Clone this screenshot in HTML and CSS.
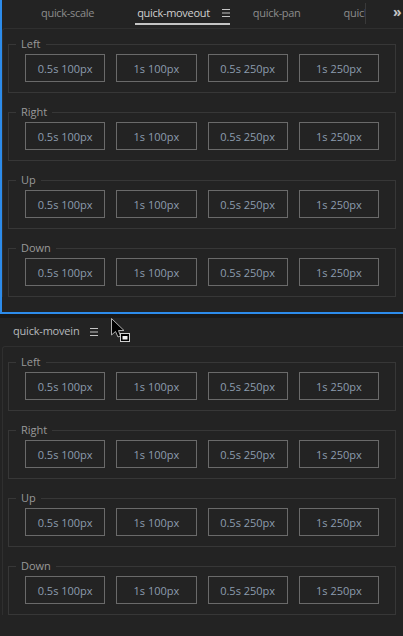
FILE: index.html
```html
<!DOCTYPE html>
<html lang="en">
<head>
<meta charset="utf-8">
<title>quick panels</title>
<link rel="stylesheet" href="styles.css">
</head>
<body>
<div class="panel panel-top">
  <div class="tabbar">
    <div class="tabs">
      <div class="tab"><span class="tab-label">quick-scale</span><span class="tab-menu is-hidden"><svg width="8" height="8" viewBox="0 0 8 8"><path d="M0 0.5H8M0 4H8M0 7.5H8" stroke="currentColor" stroke-width="1"/></svg></span></div>
      <div class="tab is-active"><span class="tab-label">quick-moveout</span><span class="tab-menu"><svg width="8" height="8" viewBox="0 0 8 8"><path d="M0 0.5H8M0 4H8M0 7.5H8" stroke="currentColor" stroke-width="1"/></svg></span></div>
      <div class="tab"><span class="tab-label">quick-pan</span><span class="tab-menu is-hidden"><svg width="8" height="8" viewBox="0 0 8 8"><path d="M0 0.5H8M0 4H8M0 7.5H8" stroke="currentColor" stroke-width="1"/></svg></span></div>
      <div class="tab tab-clipped"><span class="tab-label">quick-movein</span></div>
    </div>
    <div class="tab-sep"></div>
    <div class="tab-overflow">»</div>
  </div>
  <div class="frame">
    <fieldset class="group"><legend>Left</legend>
      <div class="buttons"><button>0.5s 100px</button><button>1s 100px</button><button>0.5s 250px</button><button>1s 250px</button></div>
    </fieldset>
    <fieldset class="group"><legend>Right</legend>
      <div class="buttons"><button>0.5s 100px</button><button>1s 100px</button><button>0.5s 250px</button><button>1s 250px</button></div>
    </fieldset>
    <fieldset class="group"><legend>Up</legend>
      <div class="buttons"><button>0.5s 100px</button><button>1s 100px</button><button>0.5s 250px</button><button>1s 250px</button></div>
    </fieldset>
    <fieldset class="group"><legend>Down</legend>
      <div class="buttons"><button>0.5s 100px</button><button>1s 100px</button><button>0.5s 250px</button><button>1s 250px</button></div>
    </fieldset>
  </div>
</div>
<div class="panel-gap"></div>
<div class="panel panel-bottom">
  <div class="header"><span class="header-label">quick-movein</span><span class="header-menu"><svg width="8" height="8" viewBox="0 0 8 8"><path d="M0 0.5H8M0 4H8M0 7.5H8" stroke="currentColor" stroke-width="1"/></svg></span></div>
  <div class="frame">
    <fieldset class="group"><legend>Left</legend>
      <div class="buttons"><button>0.5s 100px</button><button>1s 100px</button><button>0.5s 250px</button><button>1s 250px</button></div>
    </fieldset>
    <fieldset class="group"><legend>Right</legend>
      <div class="buttons"><button>0.5s 100px</button><button>1s 100px</button><button>0.5s 250px</button><button>1s 250px</button></div>
    </fieldset>
    <fieldset class="group"><legend>Up</legend>
      <div class="buttons"><button>0.5s 100px</button><button>1s 100px</button><button>0.5s 250px</button><button>1s 250px</button></div>
    </fieldset>
    <fieldset class="group"><legend>Down</legend>
      <div class="buttons"><button>0.5s 100px</button><button>1s 100px</button><button>0.5s 250px</button><button>1s 250px</button></div>
    </fieldset>
  </div>
</div>
<svg class="cursor" width="20" height="25" viewBox="0 0 20 25">
  <path d="M0.5 0.5 L0.5 17 L4.5 13.5 L7 19 L9.5 18 L7.5 12.5 L13 12.5 Z" fill="#000" stroke="#b0b0b0" stroke-width="1"/>
  <rect x="9.5" y="15.5" width="9" height="8" fill="#000" stroke="#cfcfcf" stroke-width="1"/>
  <rect x="11.5" y="18" width="5" height="3.5" fill="#f0f0f0"/>
</svg>
</body>
</html>
```
FILE: styles.css
```css
html, body {
  margin: 0;
  padding: 0;
}
body {
  position: relative;
  width: 403px;
  height: 636px;
  overflow: hidden;
  background: #191919;
  font-family: "Open Sans", "Noto Sans", sans-serif;
  font-size: 11px;
}
.panel {
  background: #232323;
  border-left: 2px solid #232323;
  overflow: hidden;
}
.panel-top {
  height: 312px;
  border-left-color: #2d8ceb;
  border-bottom: 2px solid #2d8ceb;
}
.panel-gap {
  height: 4px;
}
.panel-bottom {
  height: 318px;
}
.tabbar {
  height: 28px;
  display: flex;
}
.tabs {
  flex: none;
  width: 363px;
  box-sizing: border-box;
  padding-left: 37px;
  display: flex;
  gap: 21px;
  overflow: hidden;
}
.tab {
  flex: none;
  display: flex;
  gap: 12px;
  padding: 3px 0 0 2px;
  height: 20px;
  line-height: 20px;
  border-bottom: 2px solid transparent;
  color: #8c8c8c;
  letter-spacing: -0.3px;
  white-space: nowrap;
}
.tab-clipped {
  flex: 1 1 auto;
  min-width: 0;
  overflow: hidden;
}
.tab.is-active {
  border-bottom-color: #c4c4c4;
  color: #d0d0d0;
}
.tab-menu, .header-menu {
  display: flex;
  align-items: center;
  width: 8px;
  color: #c4c4c4;
}
.tab-menu.is-hidden {
  visibility: hidden;
}
.tab-sep {
  flex: none;
  width: 1px;
  height: 21px;
  margin-top: 3px;
  background: #393939;
}
.tab-overflow {
  flex: 1;
  padding: 2px 0 0 27px;
  line-height: 20px;
  font-size: 14px;
  font-weight: bold;
  color: #c4c4c4;
}
.header {
  height: 25px;
  padding: 3px 0 0 11px;
  line-height: 20px;
  display: flex;
  gap: 11px;
  color: #b6b9bd;
  letter-spacing: -0.2px;
}
.header-menu {
  height: 20px;
  padding-top: 1px;
  box-sizing: border-box;
}
.frame {
  border-top: 1px solid #2f2f2f;
  border-left: 1px solid #2f2f2f;
  border-top-left-radius: 3px;
  padding: 8px 0 0 5px;
}
.group {
  width: 388px;
  box-sizing: border-box;
  margin: 0 0 12px 0;
  padding: 3px 16px 10px 16px;
  border: 1px solid #373737;
}
.group legend {
  margin-left: -9px;
  padding: 0 5px;
  line-height: 14px;
  color: #999999;
}
.buttons {
  display: grid;
  grid-template-columns: repeat(4, 1fr);
  column-gap: 11px;
}
.buttons button {
  height: 28px;
  margin: 0;
  padding: 0;
  background: transparent;
  border: 1px solid #6a6a6a;
  border-radius: 0;
  color: #8c9cae;
  font-family: inherit;
  font-size: 11px;
}
.cursor {
  position: absolute;
  left: 111px;
  top: 318px;
}
```
